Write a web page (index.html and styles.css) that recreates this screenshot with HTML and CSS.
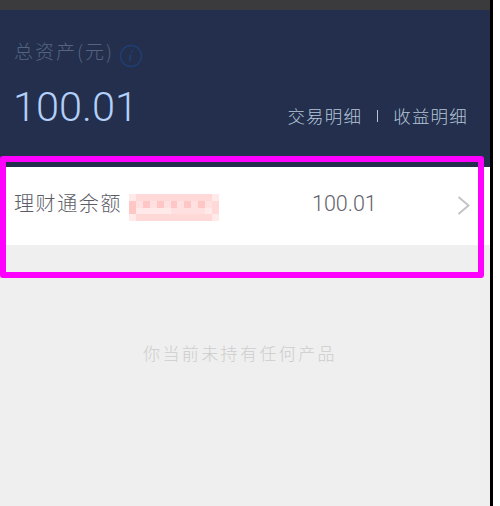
FILE: index.html
```html
<!DOCTYPE html>
<html lang="zh-CN">
<head>
    <meta charset="UTF-8">
    <meta name="viewport" content="width=device-width, initial-scale=1.0">
    <title>总资产</title>
    <link rel="stylesheet" href="styles.css">
</head>
<body>
    <div class="screen">
        <div class="status-bar"></div>

        <div class="summary">
            <div class="summary-title">
                <span>总资产(元)</span>
                <svg class="info-icon" width="24" height="24" viewBox="0 0 24 24">
                    <circle cx="12" cy="12" r="10.5" fill="none" stroke="#1f3f72" stroke-width="1.4"/>
                    <circle cx="12.8" cy="7.6" r="1.1" fill="#1f3f72"/>
                    <path d="M11.8 10.5 L10.6 17.2" fill="none" stroke="#1f3f72" stroke-width="1.6"/>
                </svg>
            </div>
            <div class="summary-row">
                <div class="total">100.01</div>
                <div class="links">
                    <span>交易明细</span>
                    <span class="divider"></span>
                    <span>收益明细</span>
                </div>
            </div>
        </div>

        <div class="balance-row">
            <span class="balance-label">理财通余额</span>
            <div class="blurred">
                <i class="p"></i><i></i><i></i><i></i><i></i><i></i><i></i><i></i><i></i><i></i><i></i><i></i><i class="p"></i>
                <i class="d"></i><i class="l"></i><i class="d"></i><i class="l"></i><i class="d"></i><i class="l"></i><i class="d"></i><i class="l"></i><i class="d"></i><i class="l"></i><i class="d"></i><i class="l"></i><i></i>
                <i class="d"></i><i class="p"></i><i class="p"></i><i class="p"></i><i class="p"></i><i class="p"></i><i class="l"></i><i class="l"></i><i class="l"></i><i class="l"></i><i class="l"></i><i class="p"></i><i></i>
                <i class="p"></i><i></i><i></i><i></i><i></i><i></i><i></i><i></i><i></i><i></i><i></i><i></i><i class="p"></i>
            </div>
            <span class="balance-value">100.01</span>
            <svg class="chevron" width="13" height="20" viewBox="0 0 13 20">
                <path d="M1.5 1 L11.5 9.5 L1.5 18" fill="none" stroke="#c4c4c6" stroke-width="2"/>
            </svg>
        </div>

        <div class="empty">你当前未持有任何产品</div>

        <div class="highlight"></div>
    </div>
</body>
</html>
```

FILE: styles.css
```css
* {
    margin: 0;
    padding: 0;
    box-sizing: border-box;
    font-family: "Noto Sans CJK SC", "Noto Sans", sans-serif;
}

body {
    background: #fff;
    overflow: hidden;
}

.screen {
    position: relative;
    width: 493px;
    height: 506px;
    background: #efefef;
    border-right: 3px solid #000;
}

.status-bar {
    height: 10px;
    background: #3b3b3d;
}

.summary {
    height: 157px;
    padding: 25px 22px 0 14px;
    background: #232f4d;
}

.summary-title {
    display: flex;
    align-items: center;
    gap: 5px;
    height: 30px;
    font-size: 19px;
    font-weight: 300;
    letter-spacing: 2px;
    color: #56657f;
}

.info-icon {
    margin-top: 11px;
}

.summary-row {
    display: flex;
    justify-content: space-between;
    align-items: flex-end;
    margin-top: 18px;
}

.total {
    margin-left: -1px;
    font-family: Roboto, sans-serif;
    font-size: 41.5px;
    font-weight: 300;
    line-height: 48px;
    color: #b3d0fa;
}

.links {
    display: flex;
    align-items: center;
    gap: 15px;
    padding-bottom: 3px;
    font-size: 17.5px;
    font-weight: 300;
    letter-spacing: 1.2px;
    color: #b4c6d8;
}

.divider {
    width: 1px;
    height: 12px;
    background: #b4c6d8;
}

.balance-row {
    display: flex;
    align-items: center;
    height: 78px;
    padding: 0 20px 6px 14px;
    background: #fff;
}

.balance-label {
    width: 115px;
    margin-top: -2px;
    font-size: 20px;
    font-weight: 300;
    letter-spacing: 1.6px;
    color: #5c5c66;
}

.blurred {
    display: grid;
    grid-template-columns: repeat(13, 1fr);
    grid-template-rows: repeat(4, 1fr);
    width: 90px;
    height: 27px;
    margin-top: 9px;
    filter: blur(0.6px);
}

.blurred i {
    background: #ffd8d8;
}

.blurred .p {
    background: #ffe9e9;
}

.blurred .l {
    background: #ffe0e0;
}

.blurred .d {
    background: #ffc6c6;
}

.balance-value {
    margin-left: 93px;
    font-family: Roboto, sans-serif;
    font-size: 21.5px;
    font-weight: 300;
    color: #62626c;
}

.chevron {
    margin-left: auto;
    margin-top: 6px;
}

.empty {
    padding: 95px 10px 0 0;
    text-align: center;
    font-size: 17px;
    font-weight: 300;
    letter-spacing: 2.4px;
    color: #cdcdcd;
}

/* annotation drawn over the screenshot */
.highlight {
    position: absolute;
    left: 0;
    top: 156px;
    width: 484px;
    height: 122px;
    border: 6px solid #ff00ff;
    border-radius: 3px;
}
```
